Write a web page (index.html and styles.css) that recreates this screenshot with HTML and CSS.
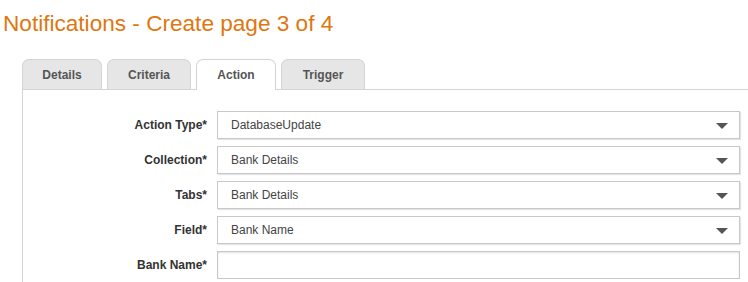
FILE: index.html
```html
<!DOCTYPE html>
<html>
<head>
<meta charset="utf-8">
<link rel="stylesheet" href="styles.css">
</head>
<body>
<h1 class="title">Notifications - Create page 3 of 4</h1>
<div class="tabs">
  <div class="tab">Details</div>
  <div class="tab wide">Criteria</div>
  <div class="tab active">Action</div>
  <div class="tab wide">Trigger</div>
</div>
<div class="panel">
  <div class="form">
    <label class="label">Action Type*</label>
    <div class="select"><span>DatabaseUpdate</span><i class="arrow"></i></div>
    <label class="label">Collection*</label>
    <div class="select"><span>Bank Details</span><i class="arrow"></i></div>
    <label class="label">Tabs*</label>
    <div class="select"><span>Bank Details</span><i class="arrow"></i></div>
    <label class="label">Field*</label>
    <div class="select"><span>Bank Name</span><i class="arrow"></i></div>
    <label class="label">Bank Name*</label>
    <div class="input"></div>
  </div>
</div>
</body>
</html>
```
FILE: styles.css
```css
html, body {
  margin: 0;
  padding: 0;
  background: #fff;
  font-family: "Liberation Sans", Arial, sans-serif;
  overflow: hidden;
}
.title {
  margin: 11px 0 0 3px;
  font-size: 22.6px;
  line-height: 26px;
  font-weight: normal;
  color: #de7710;
}
.tabs {
  display: flex;
  gap: 5px;
  margin: 22px 0 0 22px;
  height: 30px;
  position: relative;
  z-index: 1;
}
.tab {
  box-sizing: border-box;
  width: 80px;
  height: 30px;
  border: 1px solid #d4d4d4;
  border-bottom: none;
  border-radius: 7px 7px 0 0;
  background: #e6e6e6;
  color: #555;
  font-size: 12px;
  font-weight: bold;
  display: flex;
  align-items: center;
  justify-content: center;
}
.tab.wide {
  width: 84px;
}
.tab.active {
  background: #fff;
  height: 31px;
}
.panel {
  margin-left: 22px;
  border-top: 1px solid #d4d4d4;
  border-left: 1px solid #d4d4d4;
  height: 200px;
}
.form {
  display: grid;
  grid-template-columns: 184px 523px;
  column-gap: 10px;
  row-gap: 7px;
  padding-top: 21px;
  align-items: center;
}
.label {
  text-align: right;
  font-size: 12px;
  font-weight: bold;
  color: #333;
}
.select, .input {
  box-sizing: border-box;
  height: 28px;
  border: 1px solid #c8c8c8;
  box-shadow: 1px 1px 1px rgba(0,0,0,0.1);
  background: #fff;
  display: flex;
  align-items: center;
  justify-content: space-between;
  padding: 0 11px 0 13px;
  font-size: 12px;
  color: #444;
}
.input {
  box-shadow: inset 0 1px 2px rgba(0,0,0,0.12);
}
.arrow {
  width: 0;
  height: 0;
  border-left: 6px solid transparent;
  border-right: 6px solid transparent;
  border-top: 6px solid #555;
  margin-top: 2px;
}
```
